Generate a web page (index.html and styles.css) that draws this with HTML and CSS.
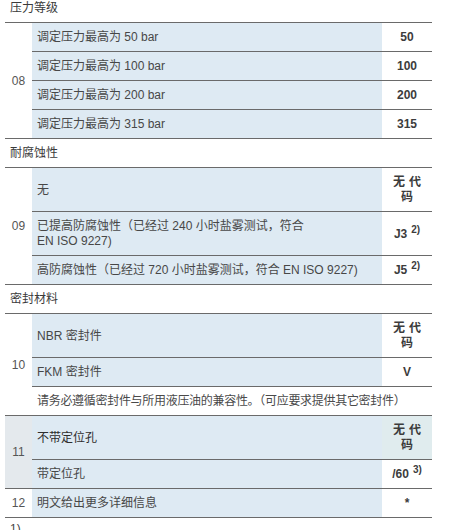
FILE: index.html
```html
<!DOCTYPE html>
<html lang="zh">
<head>
<meta charset="utf-8">
<title>订货代码</title>
<link rel="stylesheet" href="styles.css">
</head>
<body>
<div class="wrap">
<table class="spec">
  <colgroup><col class="c-num"><col class="c-desc"><col class="c-code"></colgroup>
  <tbody>
    <tr class="head"><td colspan="3">压力等级</td></tr>
    <tr><td class="num" rowspan="4">08</td><td class="desc">调定压力最高为 50 bar</td><td class="code">50</td></tr>
    <tr><td class="desc">调定压力最高为 100 bar</td><td class="code">100</td></tr>
    <tr><td class="desc">调定压力最高为 200 bar</td><td class="code">200</td></tr>
    <tr><td class="desc">调定压力最高为 315 bar</td><td class="code">315</td></tr>

    <tr class="head"><td colspan="3">耐腐蚀性</td></tr>
    <tr><td class="num" rowspan="3">09</td><td class="desc">无</td><td class="code none">无代码</td></tr>
    <tr><td class="desc">已提高防腐蚀性（已经过 240 小时盐雾测试，符合<br>EN ISO 9227)</td><td class="code">J3<sup>2)</sup></td></tr>
    <tr><td class="desc">高防腐蚀性（已经过 720 小时盐雾测试，符合 EN ISO 9227)</td><td class="code">J5<sup>2)</sup></td></tr>

    <tr class="head"><td colspan="3">密封材料</td></tr>
    <tr><td class="num" rowspan="3">10</td><td class="desc">NBR 密封件</td><td class="code none">无代码</td></tr>
    <tr><td class="desc">FKM 密封件</td><td class="code">V</td></tr>
    <tr><td class="note" colspan="2">请务必遵循密封件与所用液压油的兼容性。（可应要求提供其它密封件）</td></tr>

    <tr><td class="num num-hl" rowspan="2">11</td><td class="desc strong">不带定位孔</td><td class="code none code-hl">无代码</td></tr>
    <tr><td class="desc">带定位孔</td><td class="code">/60<sup>3)</sup></td></tr>

    <tr><td class="num">12</td><td class="desc">明文给出更多详细信息</td><td class="code">*</td></tr>
  </tbody>
</table>
<p class="foot">1)</p>
</div>
</body>
</html>
```

FILE: styles.css
```css
html, body {
  margin: 0;
  padding: 0;
  background: #ffffff;
}

body {
  font-family: "Liberation Sans", "Noto Sans CJK SC", sans-serif;
  font-size: 12px;
  color: #444444;
}

.wrap {
  padding-left: 5px;
  margin-top: -7px;
}

.spec {
  width: 427px;
  border-collapse: collapse;
  table-layout: fixed;
}

.c-num { width: 27px; }
.c-desc { width: 350px; }
.c-code { width: 50px; }

.spec td {
  border-top: 1px solid #6a6a6a;
  padding: 7px 5px 6px;
  line-height: 15px;
  vertical-align: middle;
}

.head td {
  background: #ffffff;
  color: #3a3a3a;
  padding-left: 5px;
  height: 15px;
}

.num {
  background: #ffffff;
  text-align: center;
  color: #555555;
}

.spec td.num {
  padding-left: 2px;
  padding-right: 2px;
}

.num-hl {
  background: #e4e9ed;
}

.desc {
  background: #deeaf3;
  color: #474747;
}

.strong {
  color: #2e2e2e;
}

.code {
  background: #ffffff;
  text-align: center;
  font-weight: bold;
  color: #3c3c3c;
}

.spec td.none {
  padding-left: 8px;
  padding-right: 4px;
  letter-spacing: 4px;
}

.code-hl {
  background: #e0ecee;
}

.code sup {
  font-size: 10px;
  line-height: 0;
  vertical-align: 5px;
  margin-left: 4px;
}

.note {
  background: #ffffff;
  color: #4a4a4a;
  letter-spacing: -0.3px;
}

.spec tr:last-child td {
  border-bottom: 1px solid #6a6a6a;
}

.foot {
  margin: 4px 0 0 0;
  padding-left: 5px;
  font-size: 12px;
  line-height: 15px;
  color: #444444;
}
```
